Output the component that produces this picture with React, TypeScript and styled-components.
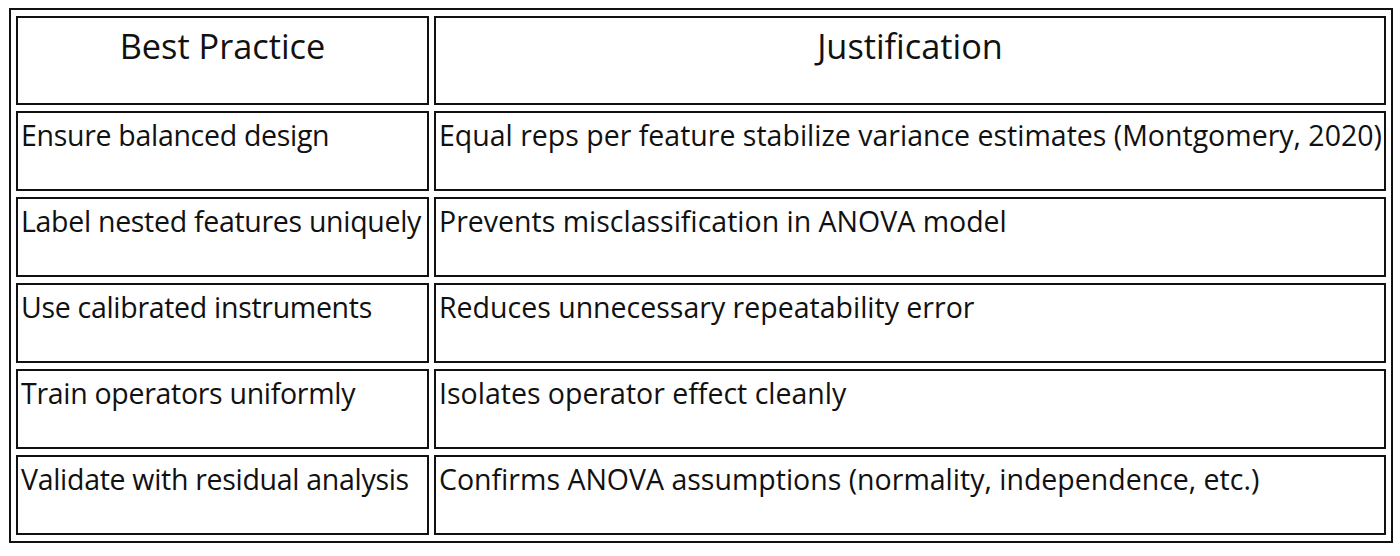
import React from "react";
import styled, { createGlobalStyle } from "styled-components";

const GlobalStyle = createGlobalStyle`
  body {
    margin: 0;
    background: #ffffff;
    font-family: "Open Sans", Lato, Arial, sans-serif;
    color: #111;
  }
`;

const rows = [
  ["Ensure balanced design", "Equal reps per feature stabilize variance estimates (Montgomery, 2020)"],
  ["Label nested features uniquely", "Prevents misclassification in ANOVA model"],
  ["Use calibrated instruments", "Reduces unnecessary repeatability error"],
  ["Train operators uniformly", "Isolates operator effect cleanly"],
  ["Validate with residual analysis", "Confirms ANOVA assumptions (normality, independence, etc.)"],
];

const App = () => {
  return (
    <>
      <GlobalStyle />
      <Page>
        <Table>
          <colgroup>
            <col style={{ width: 413 }} />
            <col style={{ width: 952 }} />
          </colgroup>
          <thead>
            <tr>
              <HeadCell>Best Practice</HeadCell>
              <HeadCell>Justification</HeadCell>
            </tr>
          </thead>
          <tbody>
            {rows.map((r) => (
              <tr key={r[0]}>
                <Cell $tight>{r[0]}</Cell>
                <Cell>{r[1]}</Cell>
              </tr>
            ))}
          </tbody>
        </Table>
      </Page>
    </>
  );
};
export default App;

const Page = styled.div`
  padding: 8px 9px;
`;

// tabela com bordas separadas, como o html antigo
const Table = styled.table`
  width: 1384px;
  table-layout: fixed;
  border-collapse: separate;
  border-spacing: 5px 6px;
  border: 2px solid #111;
`;

const HeadCell = styled.th`
  box-sizing: border-box;
  height: 89px;
  border: 2px solid #111;
  padding: 8px 4px 0;
  vertical-align: top;
  text-align: center;
  font-weight: 400;
  font-size: 34.3px;
  line-height: 40px;
`;

const Cell = styled.td<{ $tight?: boolean }>`
  box-sizing: border-box;
  height: 80px;
  border: 2px solid #111;
  padding: 5px 3px 0;
  vertical-align: top;
  text-align: left;
  font-size: 28.5px;
  line-height: 35px;
  letter-spacing: ${(p) => (p.$tight ? "-0.3px" : "0")};
  white-space: nowrap;
`;
